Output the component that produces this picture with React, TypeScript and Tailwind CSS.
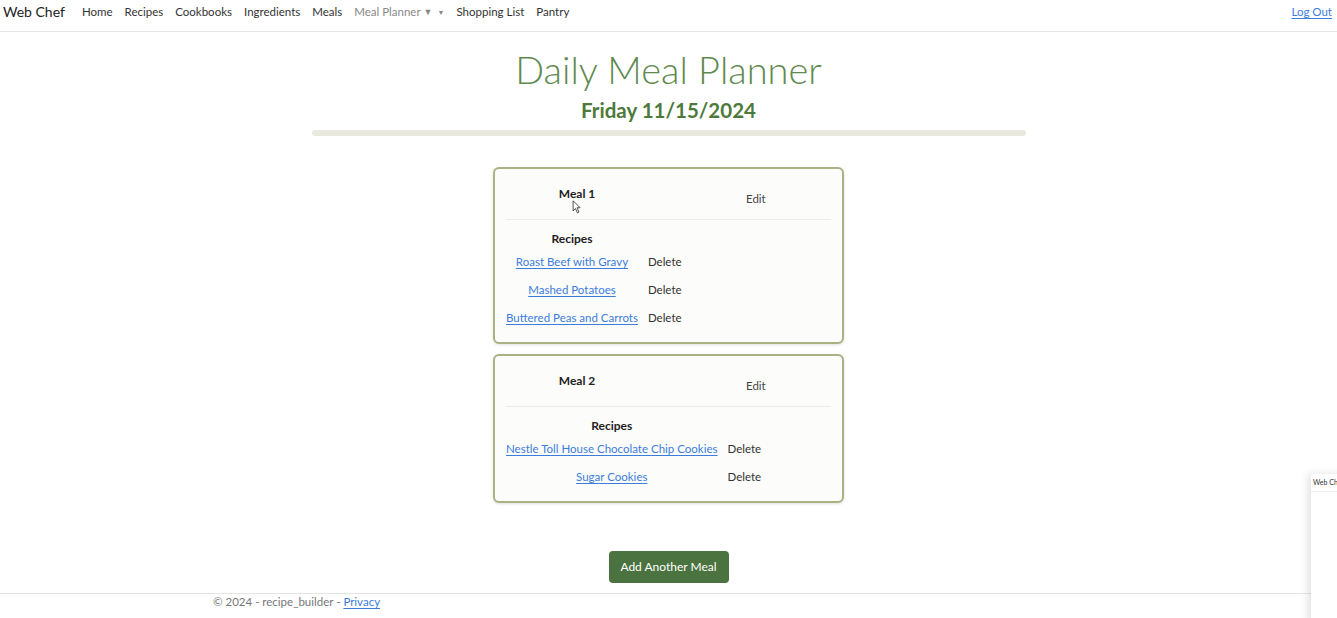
import React from "react";

const FONT = { fontFamily: 'Lato, "Open Sans", sans-serif' };

const navLinks = ["Home", "Recipes", "Cookbooks", "Ingredients", "Meals"];

type Meal = { name: string; recipes: string[] };

const meals: Meal[] = [
  {
    name: "Meal 1",
    recipes: ["Roast Beef with Gravy", "Mashed Potatoes", "Buttered Peas and Carrots"],
  },
  {
    name: "Meal 2",
    recipes: ["Nestle Toll House Chocolate Chip Cookies", "Sugar Cookies"],
  },
];

function Cursor() {
  return (
    <svg viewBox="0 0 12 18" className="absolute left-[77px] top-[31px] h-[14px] w-[10px]" aria-hidden>
      <path d="M1 1 L1 14 L4 11 L6.5 16.5 L8.5 15.5 L6 10 L10 10 Z" fill="#fff" stroke="#222" strokeWidth="1" strokeLinejoin="round" />
    </svg>
  );
}

function MealCard({ meal, withCursor }: Readonly<{ meal: Meal; withCursor?: boolean }>) {
  return (
    <div className="relative w-[351px] rounded-[6px] border-2 border-[#a9b283] bg-[#fcfcfb] px-[11px] pb-[10px] pt-[16px] shadow-[0_1px_3px_rgba(0,0,0,0.12)]">
      {withCursor && <Cursor />}
      <div className="flex items-start border-b border-[#ececec] pb-[11px]">
        <div className="w-[142px] text-center text-[12px] font-bold leading-[18px] text-[#222]">{meal.name}</div>
        <div className="ml-[98px] pt-[5px] text-[11.5px] leading-[18px] text-[#444]">Edit</div>
      </div>
      <table className="mt-[10px] border-separate border-spacing-0 text-[11.5px]">
        <thead>
          <tr>
            <th className="text-center text-[12px] font-bold leading-[18px] text-[#222]">Recipes</th>
            <th />
          </tr>
        </thead>
        <tbody>
          {meal.recipes.map((r) => (
            <tr key={r}>
              <td className="h-[28px] text-center align-middle">
                <a href="#" className="text-[#3b7ddd] underline underline-offset-2">
                  {r}
                </a>
              </td>
              <td className="h-[28px] pl-[10px] align-middle text-[#333]">Delete</td>
            </tr>
          ))}
        </tbody>
      </table>
    </div>
  );
}

export default function App() {
  return (
    <div className="relative h-[618px] w-full overflow-hidden bg-white" style={FONT}>
      {/* Navbar */}
      <nav className="flex h-[32px] items-center border-b border-[#e5e5e5] pb-[7px] pl-[3px] pr-[5px]">
        <span className="mr-[17px] text-[14px] leading-none text-[#222]">Web Chef</span>
        <div className="flex items-center gap-[12px] text-[11.5px] text-[#333]">
          {navLinks.map((l) => (
            <a key={l} href="#">{l}</a>
          ))}
          <span className="flex items-center text-[#888]">
            Meal Planner
            <span className="ml-[3px] text-[9px]">▼</span>
            <span className="ml-[5px] text-[7px]">▼</span>
          </span>
          <a href="#">Shopping List</a>
          <a href="#">Pantry</a>
        </div>
        <a href="#" className="ml-auto text-[11.5px] text-[#3b7ddd] underline underline-offset-2">
          Log Out
        </a>
      </nav>

      {/* Header */}
      <header className="flex flex-col items-center pt-[13px]">
        <h1 className="text-[38px] font-light leading-[48px] text-[#5f8a4f]">Daily Meal Planner</h1>
        <h2 className="mt-[2px] text-[20.5px] font-bold leading-[30px] text-[#4d7a3b]">Friday 11/15/2024</h2>
        <div className="mt-[5px] h-[6px] w-[714px] rounded-[3px] bg-[#e9e9de]" />
      </header>

      {/* Meals */}
      <main className="mt-[31px] flex flex-col items-center gap-[10px]">
        {meals.map((m, i) => (
          <MealCard key={m.name} meal={m} withCursor={i === 0} />
        ))}
        <button className="mt-[38px] h-[32px] w-[120px] rounded-[4px] bg-[#4a733f] text-[12px] text-white">
          Add Another Meal
        </button>
      </main>

      {/* Footer */}
      <footer className="mt-[10px] border-t border-[#e5e5e5] pl-[213px] text-[11.5px] leading-[16px] text-[#777]">
        © 2024 - recipe_builder -{" "}
        <a href="#" className="text-[#3b7ddd] underline underline-offset-2">Privacy</a>
      </footer>

      {/* Side widget peeking from the right edge */}
      <div className="absolute left-[1311px] top-[474px] h-[150px] w-[40px] rounded-tl-[3px] bg-white shadow-[-3px_0_8px_rgba(0,0,0,0.12)]">
        <div className="overflow-hidden whitespace-nowrap border-b border-[#eee] px-[2px] py-[3px] text-[7px] text-[#333]">Web Ch</div>
      </div>
    </div>
  );
}
